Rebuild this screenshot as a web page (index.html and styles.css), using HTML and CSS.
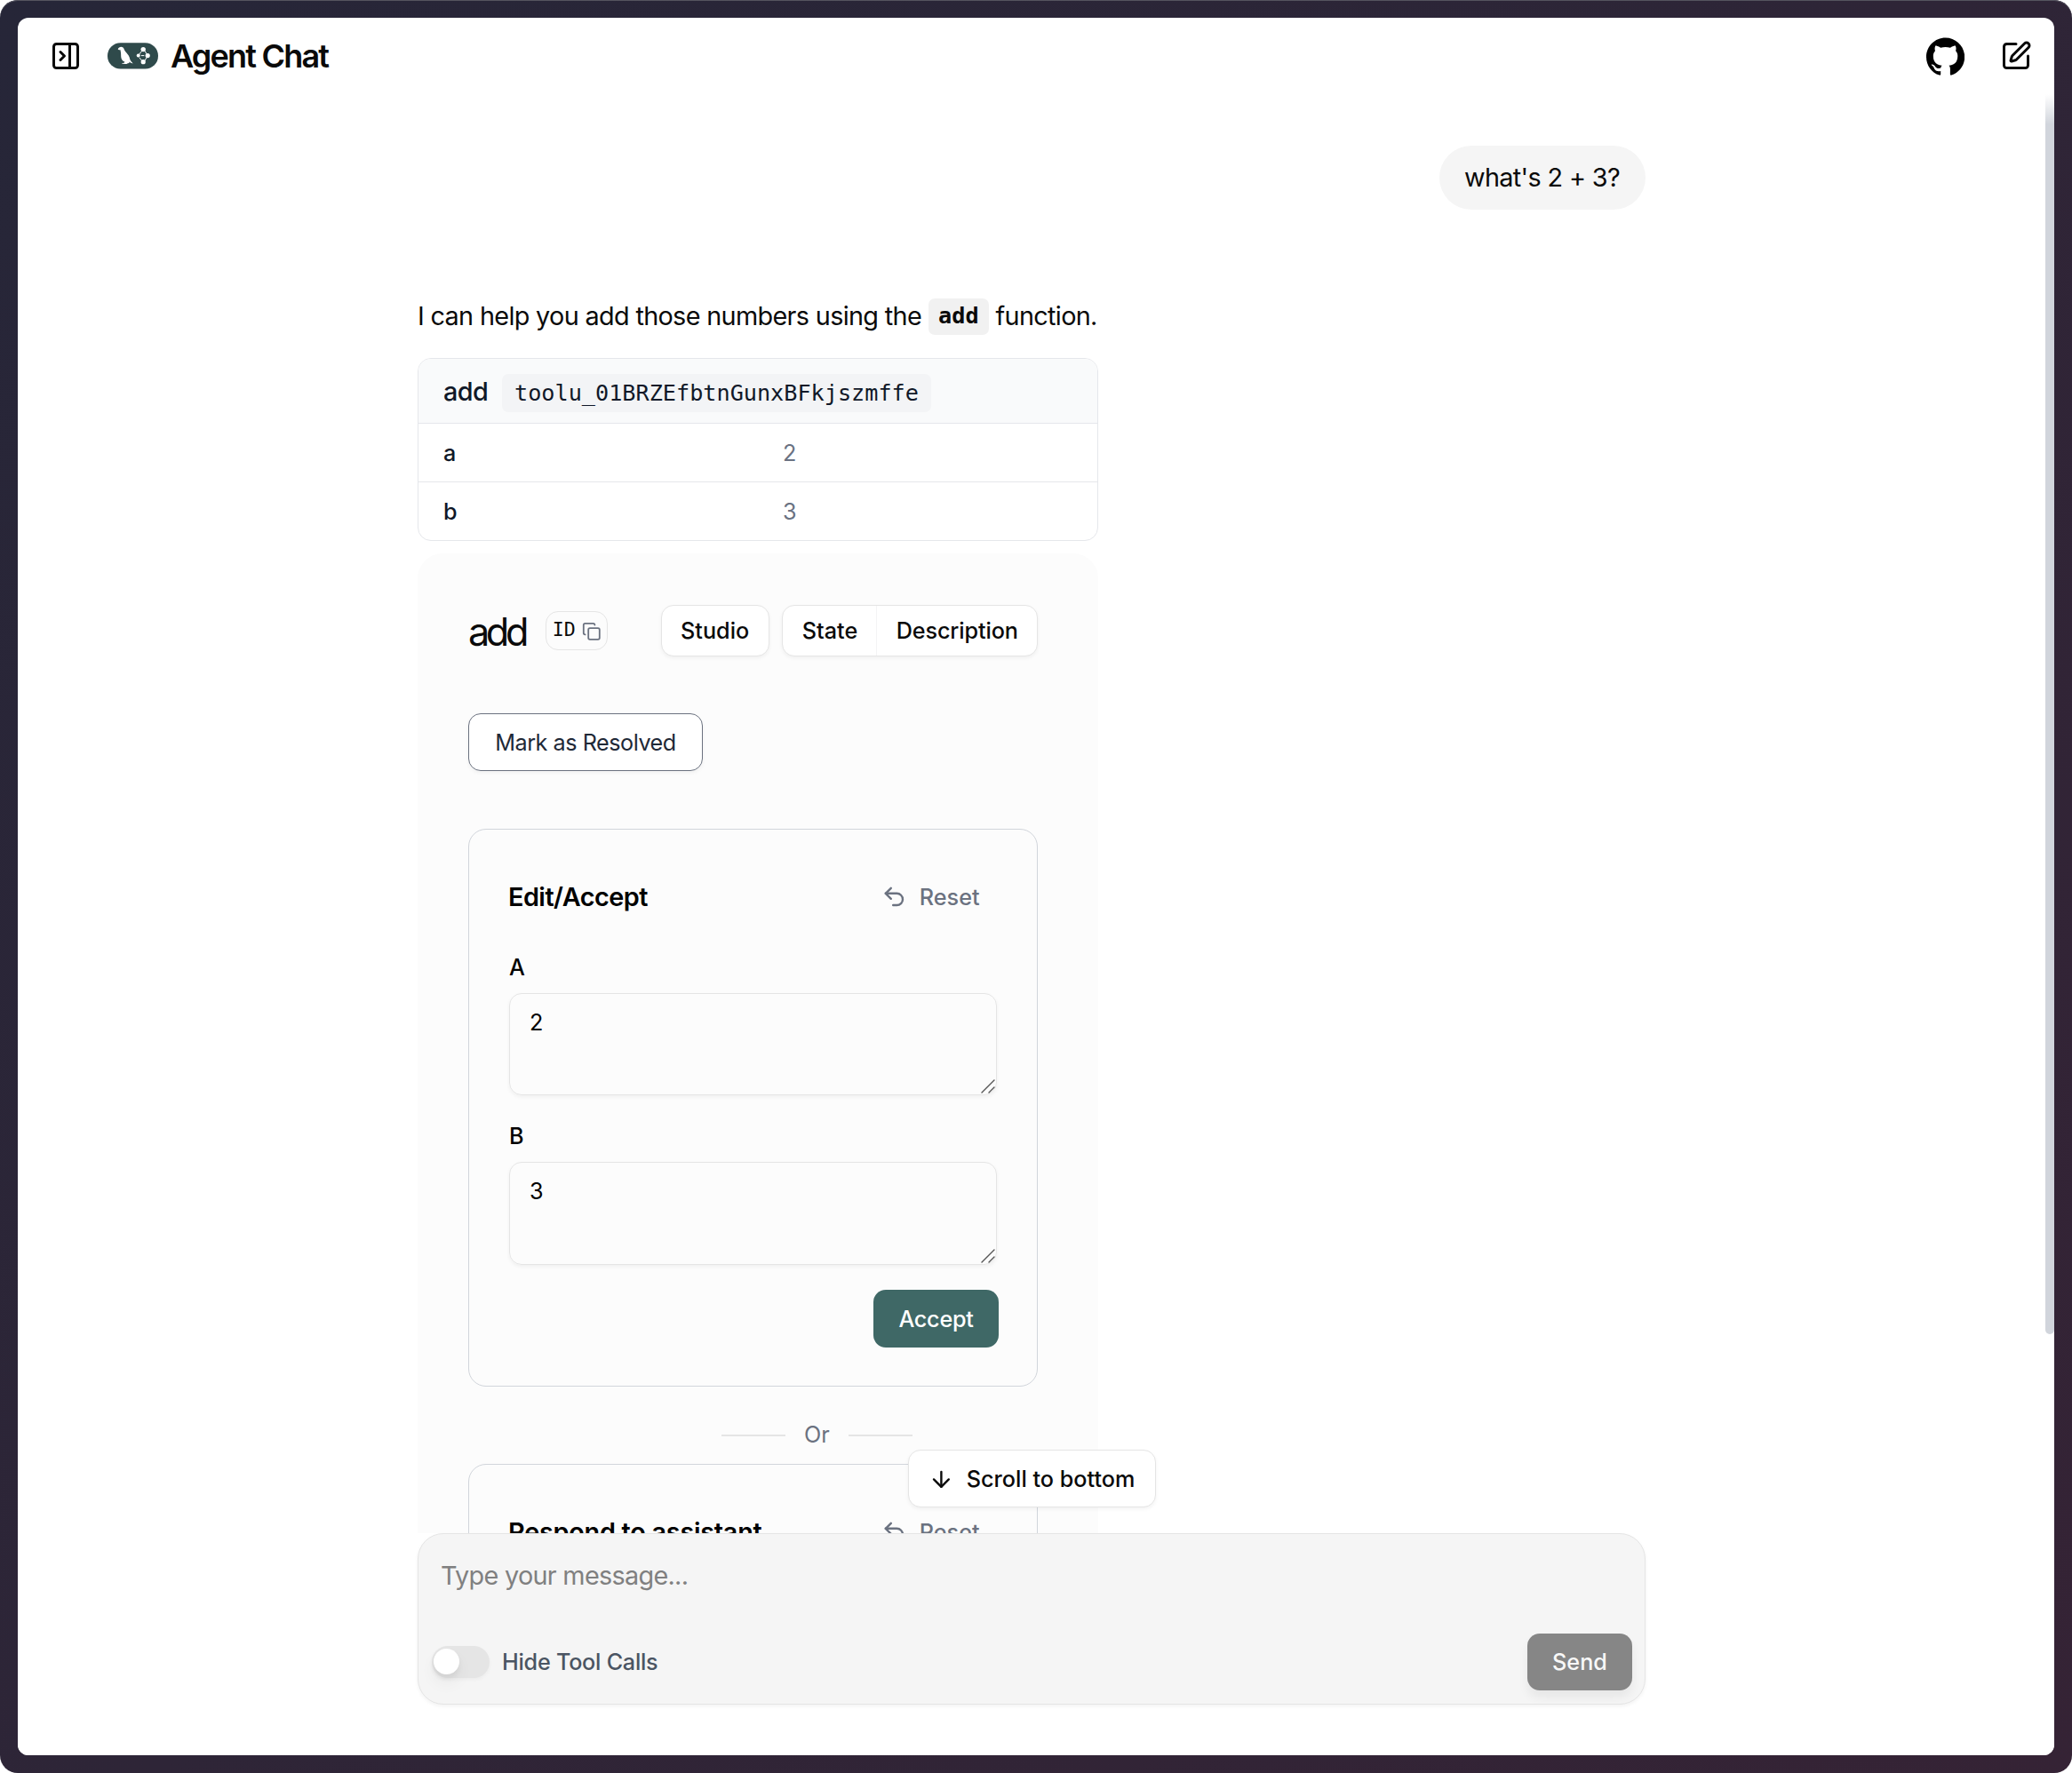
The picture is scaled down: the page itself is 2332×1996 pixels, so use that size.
FILE: index.html
```html
<!DOCTYPE html>
<html lang="en">
<head>
<meta charset="utf-8">
<title>Agent Chat</title>
<link rel="stylesheet" href="styles.css">
</head>
<body>
<div class="frame">
<div class="window">
  <header class="topbar">
    <div class="brand">
      <svg class="icon-lg" viewBox="0 0 24 24"><rect x="3" y="3" width="18" height="18" rx="2"/><path d="M15 3v18"/><path d="m8 9 3 3-3 3"/></svg>
      <svg class="logo" viewBox="0 0 57 30">
        <rect y=".3" width="57" height="29.2" rx="14.600" fill="#2f4a4b"/>
        <path fill="#fff" d="M11.700 7.400C12.300 5.800 13.700 4.800 15.300 4.800c1.800 0 2.900 1 3.300 2.500.4 1.500 1.400 2.600 2.600 3.900 2 2.200 3.500 4.200 3.900 6.900.2 1.500.9 2.300 1.600 3.100l2 2.200-2.600-.6-1.400-1.300-.4 1.500-1.500.2-1.200.7-2.400.1-1.300-.2-1.500.1.300-.9 2.100-.3.500-1.200c-2.500-1-4.100-3.100-4.100-6.100 0-2.500-.1-4.800-.7-7.100-.8-.3-1.900-.1-2.800-.9z"/>
        <path stroke="#fff" stroke-width="1" d="M39.300 8.500 34.800 14.200M41.200 8.500l3.600 5M44.600 16l-3.200 5M36 17l2.800 3.500M38.300 14.600h2.600"/>
        <g fill="#fff"><circle cx="40.200" cy="7.600" r="2.700"/><circle cx="40.200" cy="21.700" r="2.600"/><circle cx="45.200" cy="14.600" r="2.600"/><circle cx="34.700" cy="14.600" r="2"/></g>
      </svg>
      <span class="title">Agent Chat</span>
    </div>
    <div class="actions">
      <svg class="github" viewBox="0 0 24 24"><path d="M12 .297c-6.63 0-12 5.373-12 12 0 5.303 3.438 9.800 8.205 11.385.6.113.82-.258.82-.577 0-.285-.01-1.040-.015-2.040-3.338.724-4.042-1.610-4.042-1.610C4.422 18.070 3.633 17.700 3.633 17.700c-1.087-.744.084-.729.084-.729 1.205.084 1.838 1.236 1.838 1.236 1.070 1.835 2.809 1.305 3.495.998.108-.776.417-1.305.760-1.605-2.665-.3-5.466-1.332-5.466-5.930 0-1.310.465-2.380 1.235-3.220-.135-.303-.54-1.523.105-3.176 0 0 1.005-.322 3.300 1.230.960-.267 1.980-.399 3-.405 1.020.006 2.040.138 3 .405 2.280-1.552 3.285-1.230 3.285-1.230.645 1.653.240 2.873.120 3.176.765.840 1.230 1.910 1.230 3.220 0 4.610-2.805 5.625-5.475 5.920.420.360.810 1.096.810 2.220 0 1.606-.015 2.896-.015 3.286 0 .315.210.690.825.570C20.565 22.092 24 17.592 24 12.297c0-6.627-5.373-12-12-12"/></svg>
      <svg class="icon-lg" viewBox="0 0 24 24"><path d="M12 3H5a2 2 0 0 0-2 2v14a2 2 0 0 0 2 2h14a2 2 0 0 0 2-2v-7"/><path d="M18.375 2.625a1 1 0 0 1 3 3l-9.013 9.014a2 2 0 0 1-.853.505l-2.873.840a.5.5 0 0 1-.620-.620l.840-2.873a2 2 0 0 1 .506-.852z"/></svg>
    </div>
  </header>

  <main class="thread">
    <div class="human">what's 2 + 3?</div>
    <div class="reply">
      <p class="answer"><span>I can help you add those numbers using the</span><code class="inline-code">add</code><span>function.</span></p>

      <div class="call">
        <div class="call-head"><span class="call-name">add</span><code class="call-id">toolu_01BRZEfbtnGunxBFkjszmffe</code></div>
        <div class="call-row"><span class="key">a</span><span class="val">2</span></div>
        <div class="call-row"><span class="key">b</span><span class="val">3</span></div>
      </div>

      <section class="interrupt">
        <div class="int-head">
          <h2 class="int-title">add</h2>
          <button class="id-btn">ID<svg class="copy" viewBox="0 0 24 24"><rect x="8" y="8" width="14" height="14" rx="2"/><path d="M4 16c-1.100 0-2-.9-2-2V4c0-1.100.9-2 2-2h10c1.100 0 2 .9 2 2"/></svg></button>
          <button class="btn studio">Studio</button>
          <div class="btn-group"><button class="seg state">State</button><button class="seg desc">Description</button></div>
        </div>
        <button class="resolve">Mark as Resolved</button>

        <div class="card">
          <div class="card-head"><h3 class="card-title">Edit/Accept</h3><button class="reset"><svg class="icon" viewBox="0 0 24 24"><path d="M9 14 4 9l5-5"/><path d="M4 9h10.500a5.500 5.500 0 0 1 5.500 5.500a5.500 5.500 0 0 1-5.500 5.500H11"/></svg>Reset</button></div>
          <div class="field"><label class="label">A</label><div class="area">2<svg class="grip" viewBox="0 0 16 16"><path d="M1 15 15 1M9 15l6-6"/></svg></div></div>
          <div class="field"><label class="label">B</label><div class="area">3<svg class="grip" viewBox="0 0 16 16"><path d="M1 15 15 1M9 15l6-6"/></svg></div></div>
          <button class="accept">Accept</button>
        </div>

        <div class="or"><i class="rule"></i><span>Or</span><i class="rule"></i></div>

        <div class="card">
          <div class="card-head"><h3 class="card-title respond">Respond to assistant</h3><button class="reset"><svg class="icon" viewBox="0 0 24 24"><path d="M9 14 4 9l5-5"/><path d="M4 9h10.500a5.500 5.500 0 0 1 5.500 5.500a5.500 5.500 0 0 1-5.500 5.500H11"/></svg>Reset</button></div>
        </div>
      </section>
    </div>
  </main>

  <footer class="footer">
    <button class="scroll-btn"><svg class="icon" viewBox="0 0 24 24"><path d="M12 5v14"/><path d="m19 12-7 7-7-7"/></svg>Scroll to bottom</button>
    <div class="composer">
      <div class="placeholder">Type your message...</div>
      <div class="composer-bar">
        <span class="switch"><i class="thumb"></i></span>
        <span class="switch-label">Hide Tool Calls</span>
        <button class="send">Send</button>
      </div>
    </div>
  </footer>
  <div class="scrollbar"></div>
</div>
</div>
</body>
</html>
```
FILE: styles.css
```css
* { box-sizing: border-box; margin: 0; padding: 0; }
body { background: #fff; font-family: Inter, "Liberation Sans", sans-serif; font-size: 28.8px; line-height: 43px; color: #0a0a0a; }
button { font: inherit; color: inherit; background: none; border: 0; }
svg { display: block; flex: none; fill: none; stroke: currentColor; stroke-width: 2; stroke-linecap: round; stroke-linejoin: round; }
code { font-family: "DejaVu Sans Mono", monospace; font-size: 25.2px; letter-spacing: 0; }

.frame { width: 2332px; height: 1996px; padding: 20px; border-radius: 20px; background: linear-gradient(135deg, #262638 0%, #2e2537 50%, #352335 100%); box-shadow: inset 0 1px 0 #55545f; }
.window { position: relative; display: flex; flex-direction: column; height: 1956px; border-radius: 12px; background: #fff; overflow: hidden; }

.topbar { display: flex; justify-content: space-between; align-items: center; height: 86px; padding: 0 25px 0 36px; flex: none; }
.brand, .actions { display: flex; align-items: center; }
.icon-lg { width: 36px; height: 36px; }
.icon { width: 28.8px; height: 28.8px; }
.logo { width: 57px; height: 30px; margin-left: 29px; stroke: none; }
.title { margin-left: 14px; font-size: 36px; font-weight: 600; letter-spacing: -1.8px; }
.actions { gap: 40px; }
.github { width: 43.2px; height: 43.2px; margin-top: 1px; fill: #000; stroke: none; }

.thread { flex: 1; min-height: 0; overflow: hidden; padding: 58px 460px 0 450px; display: flex; flex-direction: column; }
.human { align-self: flex-end; flex: none; width: 232px; height: 72px; line-height: 71px; padding-left: 28px; border-radius: 36px; background: #f5f5f5; letter-spacing: -.65px; white-space: nowrap; }
.reply { width: 766px; flex: none; margin-top: 99px; }
.answer { display: flex; align-items: center; height: 42px; padding-bottom: 1px; white-space: nowrap; letter-spacing: -.66px; }
.inline-code { margin: 1px 8px 0; height: 41px; line-height: 40px; padding: 0 11px; border-radius: 7px; background: #f1f1f1; font-weight: 700; }

.call { margin-top: 26px; border: 1px solid #e5e7eb; border-radius: 15px; overflow: hidden; height: 206px; }
.call-head { display: flex; align-items: center; height: 72px; padding: 0 29px 0 28px; background: #f9fafb; color: #101828; }
.call-name { font-weight: 500; width: 66px; letter-spacing: -.6px; }
.call-id { height: 43px; line-height: 44px; margin-top: 4px; padding: 0 14px; border-radius: 7px; background: #f3f4f6; }
.call-row { display: flex; align-items: center; height: 66px; padding: 2px 29px 0 28px; border-top: 1px solid #e5e7eb; font-size: 25.2px; }
.key { width: 382px; font-weight: 500; color: #101828; }
.val { color: #6a7282; }

.interrupt { margin-top: 14px; padding: 58px 68px 100px 57px; border-radius: 28px; background: #fcfcfc; }
.int-head { display: flex; align-items: center; height: 58px; }
.int-title { width: 87px; font-size: 43.2px; font-weight: 400; letter-spacing: -4.4px; padding-top: 2px; }
.id-btn { display: flex; align-items: center; justify-content: space-between; width: 70px; height: 44px; padding: 0 6px 2px 7px; border: 1px solid #e5e5e5; border-radius: 14px; font: 21.6px/40px "DejaVu Sans Mono", monospace; }
.copy { width: 21.6px; height: 21.6px; margin-top: 3px; color: #6b7280; }
.btn, .btn-group { height: 58px; border: 1px solid #e5e5e5; border-radius: 14px; background: #fff; box-shadow: 0 2px 4px rgba(0,0,0,.05); font-size: 25.2px; font-weight: 500; }
.studio { width: 122px; margin-left: 60px; }
.btn-group { display: flex; width: 289px; margin-left: 14px; }
.seg { height: 56px; font-weight: 500; }
.state { width: 106px; padding-left: 2px; border-right: 1px solid #f4f4f5; }
.desc { flex: 1; padding-left: 1px; letter-spacing: -.1px; }
.resolve { display: block; width: 264px; height: 65px; margin-top: 64px; padding-top: 1px; border: 1px solid #6b7280; border-radius: 14px; background: #fff; font-size: 25.2px; letter-spacing: -.48px; color: #1f2937; box-shadow: 0 2px 4px rgba(0,0,0,.05); }

.card { height: 628px; border: 1px solid #d1d5db; border-radius: 20px; padding: 43px 43px 0 44px; }
.resolve + .card { margin-top: 65px; }
.card-head { display: flex; justify-content: space-between; height: 65px; align-items: center; }
.card-title { font-size: 28.8px; font-weight: 600; letter-spacing: -.52px; color: #000; }
.respond { letter-spacing: -.25px; }
.reset { display: flex; align-items: center; gap: 14px; width: 132px; padding-top: 1px; font-size: 25.2px; font-weight: 500; color: #6b7280; }
.reset .icon { margin-top: -2px; }
.field { padding-left: 1px; font-size: 25.2px; color: #000; }
.label { display: block; height: 52px; line-height: 47px; font-weight: 500; }
.card-head + .field { margin-top: 24px; }
.field + .field { margin-top: 23px; }
.area { position: relative; width: 549px; height: 115px; border: 1px solid #e5e5e5; border-radius: 14px; padding: 14px 22px; line-height: 36px; box-shadow: 0 2px 4px rgba(0,0,0,.05); }
.field + .field .area { height: 116px; line-height: 37px; }
.grip { position: absolute; right: 1px; bottom: 1px; width: 16px; height: 16px; stroke: #555; stroke-width: 1.4; }
.accept { display: block; width: 141px; height: 65px; margin: 28px 0 0 411px; padding-top: 1px; border-radius: 14px; background: #3f6866; color: #fff; font-size: 25.2px; font-weight: 500; letter-spacing: -.25px; }

.or { display: flex; align-items: center; gap: 21px; height: 87px; padding: 22px 0 0 285px; font-size: 25.2px; color: #6b7280; }
.rule { width: 72px; height: 2px; background: #e5e5e5; }

.footer { position: relative; flex: none; height: 250px; padding: 0 460px 0 450px; background: #fff; }
.scroll-btn { position: absolute; left: 1002px; top: -94px; display: flex; align-items: center; gap: 14px; width: 279px; height: 65px; padding: 1px 0 0 22px; border: 1px solid #e5e5e5; border-radius: 14px; background: #fff; box-shadow: 0 2px 4px rgba(0,0,0,.05); font-size: 25.2px; font-weight: 500; white-space: nowrap; }
.composer { height: 193px; border: 1px solid #e5e5e5; border-radius: 29px; background: #f5f5f5; box-shadow: 0 2px 4px rgba(0,0,0,.05); padding: 25px 14px 0 15px; }
.placeholder { height: 43px; padding-left: 10px; letter-spacing: -.7px; color: #808080; }
.composer-bar { display: flex; align-items: center; height: 64px; margin-top: 44px; font-size: 25.2px; font-weight: 500; }
.switch { width: 65px; height: 36px; border-radius: 18px; background: #e5e5e5; padding: 3px 2px; box-shadow: 0 2px 4px rgba(0,0,0,.04); }
.thumb { display: block; width: 29px; height: 29px; border-radius: 50%; background: #fff; box-shadow: 0 10px 18px rgba(0,0,0,.05), 0 4px 6px rgba(0,0,0,.05); }
.switch-label { margin-left: 14px; letter-spacing: -.25px; color: #4b5563; }
.send { width: 118px; height: 64px; margin-left: auto; border-radius: 14px; background: #868686; color: #f8f8f8; font-weight: 500; box-shadow: 0 8px 12px rgba(0,0,0,.06); }

.scrollbar { position: absolute; right: 0; top: 86px; width: 10px; height: 1396px; border-radius: 0 0 5px 5px; background: linear-gradient(#fff, #d1d5dc 34px); }
```
